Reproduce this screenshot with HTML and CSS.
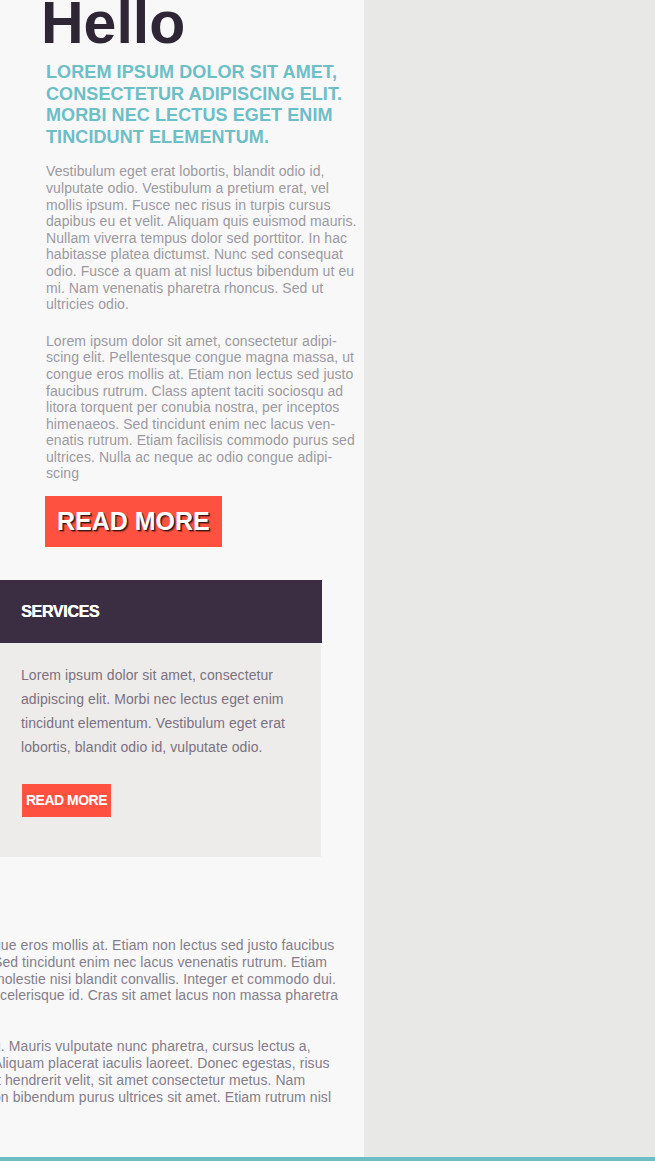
FILE: index.html
```html
<!DOCTYPE html>
<html lang="en">
<head>
<meta charset="utf-8">
<title>Hello</title>
<link rel="stylesheet" href="styles.css">
</head>
<body>
<div class="page">
  <div class="panel">
    <section class="intro">
      <h1 class="hello">Hello</h1>
      <h2 class="lead">Lorem ipsum dolor sit amet, consectetur adipiscing elit. Morbi nec lectus eget enim tincidunt elementum.</h2>
      <p class="copy">Vestibulum eget erat lobortis, blandit odio id, vulputate odio. Vestibulum a pretium erat, vel mollis ipsum. Fusce nec risus in turpis cursus dapibus eu et velit. Aliquam quis euismod mauris. Nullam viverra tempus dolor sed porttitor. In hac habitasse platea dictumst. Nunc sed consequat odio. Fusce a quam at nisl luctus bibendum ut eu mi. Nam venenatis pharetra rhoncus. Sed ut ultricies odio.</p>
      <p class="copy">Lorem ipsum dolor sit amet, consectetur adipi&shy;scing elit. Pellentesque congue magna massa, ut congue eros mollis at. Etiam non lectus sed justo faucibus rutrum. Class aptent taciti sociosqu ad litora torquent per conubia nostra, per inceptos himenaeos. Sed tincidunt enim nec lacus ven&shy;enatis rutrum. Etiam facilisis commodo purus sed ultrices. Nulla ac neque ac odio congue adipi&shy;scing</p>
      <a class="btn-big" href="#">READ MORE</a>
    </section>

    <section class="services">
      <div class="services-head">SERVICES</div>
      <div class="services-body">
        <p>Lorem ipsum dolor sit amet, consectetur adipiscing elit. Morbi nec lectus eget enim tincidunt elementum. Vestibulum eget erat lobortis, blandit odio id, vulputate odio.</p>
        <a class="btn-small" href="#">READ MORE</a>
      </div>
    </section>

    <section class="clipped">
      <p class="clip-copy">gue eros mollis at. Etiam non lectus sed justo faucibus<br>Sed tincidunt enim nec lacus venenatis rutrum. Etiam<br>molestie nisi blandit convallis. Integer et commodo dui.<br>scelerisque id. Cras sit amet lacus non massa pharetra</p>
      <p class="clip-copy">u. Mauris vulputate nunc pharetra, cursus lectus a,<br>Aliquam placerat iaculis laoreet. Donec egestas, risus<br>&nbsp;t hendrerit velit, sit amet consectetur metus. Nam<br>on bibendum purus ultrices sit amet. Etiam rutrum nisl</p>
    </section>
  </div>
  <div class="side"></div>
</div>
<div class="bottom-bar"></div>
</body>
</html>
```

FILE: styles.css
```css
html, body {
  margin: 0;
  padding: 0;
}

body {
  background: #e8e8e6;
  font-family: "Liberation Sans", Arial, sans-serif;
  width: 655px;
  height: 1161px;
  overflow: hidden;
}

.page {
  display: flex;
  height: 1157px;
}

.panel {
  width: 364px;
  flex: 0 0 364px;
  background: #f8f8f8;
  overflow: hidden;
}

.side {
  flex: 1;
  background: #e8e8e6;
}

.bottom-bar {
  height: 4px;
  background: #6dbdc5;
}

/* intro */
.intro {
  padding-left: 46px;
  width: 312px;
}

.hello {
  margin: -6px 0 0 -5px;
  font-size: 59px;
  line-height: 58px;
  font-weight: bold;
  color: #2e2634;
}

.lead {
  margin: 10px 0 0;
  font-size: 18px;
  line-height: 21.6px;
  font-weight: bold;
  letter-spacing: 0.1px;
  text-transform: uppercase;
  color: #6cbec7;
}

.copy {
  margin: 15px 0 0;
  font-size: 14px;
  line-height: 16.6px;
  letter-spacing: 0.08px;
  color: #9c98a0;
  hyphens: manual;
}

.copy + .copy {
  margin-top: 20px;
}

.btn-big {
  display: inline-block;
  margin: 14px 0 0 -1px;
  padding: 0 12px;
  height: 51px;
  line-height: 51px;
  background: #fe5140;
  color: #fff;
  font-size: 25px;
  font-weight: bold;
  text-decoration: none;
  text-shadow: 1px 1px 0 #3a1512, 2px 2px 1px rgba(0, 0, 0, 0.35);
  vertical-align: top;
}

/* services */
.services {
  margin-top: 33px;
  width: 322px;
}

.services-head {
  height: 63px;
  line-height: 63px;
  padding-left: 21px;
  background: #3b2d42;
  color: #fff;
  font-size: 16px;
  font-weight: bold;
  letter-spacing: -0.3px;
  text-shadow: 0.4px 0 0 #fff;
}

.services-body {
  width: 321px;
  box-sizing: border-box;
  background: #eeecea;
  padding: 20px 21px 40px;
}

.services-body p {
  margin: 0;
  font-size: 14px;
  line-height: 24px;
  letter-spacing: 0.08px;
  color: #7a7180;
}

.btn-small {
  display: inline-block;
  margin: 25px 0 0 1px;
  padding: 0 4px;
  height: 33px;
  line-height: 33px;
  background: #fe5140;
  color: #fff;
  font-size: 14px;
  font-weight: bold;
  letter-spacing: -0.5px;
  text-decoration: none;
  vertical-align: top;
}

/* clipped bottom text */
.clipped {
  margin-top: 80px;
}

.clip-copy {
  margin: 0 0 0 -7px;
  white-space: nowrap;
  font-size: 14px;
  line-height: 16.8px;
  letter-spacing: 0.08px;
  color: #847e8a;
}

.clip-copy + .clip-copy {
  margin-top: 34px;
}
```
